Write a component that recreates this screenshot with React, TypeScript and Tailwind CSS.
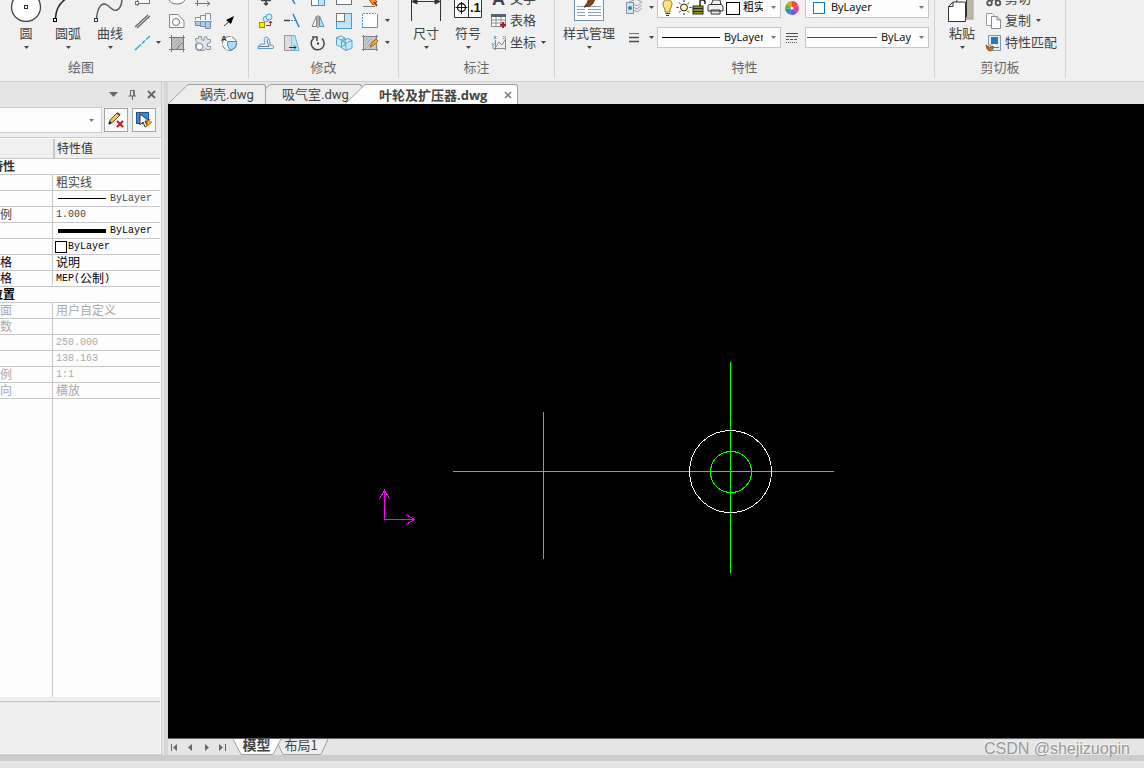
import type { ReactNode } from "react";

function Caret({ className = "text-[#444444]" }: { className?: string }) {
  return (
    <svg width="5" height="3" viewBox="0 0 5 3" className={`shrink-0 ${className}`} aria-hidden="true">
      <path d="M0 0H5L2.5 3Z" fill="currentColor" />
    </svg>
  );
}

function Icon({ children, size = 20 }: { children?: ReactNode; size?: number }) {
  return (
    <svg
      width={size}
      height={size}
      viewBox={`0 0 ${size} ${size}`}
      fill="none"
      stroke="#6b7280"
      strokeWidth="1"
      className="shrink-0"
      aria-hidden="true"
    >
      {children}
    </svg>
  );
}

function Group({ label, className, children }: { label: string; className: string; children: ReactNode }) {
  return (
    <section aria-label={label} className={`flex shrink-0 flex-col justify-end border-r border-[#d2d2d2] ${className}`}>
      <div className="flex items-end">{children}</div>
      <h2 className="h-6 text-center leading-[27px] text-[#666666]">{label}</h2>
    </section>
  );
}

function BigButton({ label, icon, className = "w-[42px]" }: { label: string; icon: ReactNode; className?: string }) {
  return (
    <button className={`flex shrink-0 flex-col items-center pb-[5px] ${className}`}>
      <Icon size={32}>{icon}</Icon>
      <span className="mb-1 h-5 leading-[22px] whitespace-nowrap">{label}</span>
      <Caret />
    </button>
  );
}

function ToolButton({ label, children }: { label: string; children: ReactNode }) {
  return (
    <button aria-label={label} className="flex h-[22px] w-[26px] items-center justify-center">
      <Icon>{children}</Icon>
    </button>
  );
}

function CaretButton({ label }: { label: string }) {
  return (
    <button aria-label={label} className="flex h-[22px] w-[10px] items-center justify-center pr-px pb-[2px]">
      <Caret />
    </button>
  );
}

function TextTool({ label, icon, menu = false }: { label: string; icon: ReactNode; menu?: boolean }) {
  return (
    <button className="flex h-[22px] items-center pb-[2px] whitespace-nowrap">
      <Icon>{icon}</Icon>
      <span className="ml-px leading-5">{label}</span>
      {menu && <span className="ml-[5px]"><Caret /></span>}
    </button>
  );
}

function Combo({ label, value, children }: { label: string; value: string; children?: ReactNode }) {
  return (
    <div className="flex h-[21px] w-[124px] items-center border border-[#c6c6c6] bg-[#fdfdfd] pl-1">
      {children}
      <select
        aria-label={label}
        className="h-full min-w-0 flex-1 appearance-none bg-transparent font-['Open_Sans','Noto_Sans_CJK_SC',sans-serif] text-[11px] text-black outline-none"
      >
        <option>{value}</option>
      </select>
      <span className="mr-1 ml-2"><Caret className="text-[#777777]" /></span>
    </div>
  );
}

function DrawGroup() {
  return (
    <Group label="绘图" className="w-[335px]">
      <div className="flex w-full items-end justify-end pr-[6px]">
        <div className="flex items-end pl-1">
          <BigButton label="直线" icon={<path d="M3 29L29 3" />} />
          <BigButton
            label="圆"
            icon={
              <>
                <circle cx="16" cy="17" r="14.5" fill="#fff" stroke="#444" strokeWidth="1.3" />
                <rect x="14.5" y="15.5" width="3" height="3" stroke="#333" />
              </>
            }
          />
          <BigButton
            label="圆弧"
            icon={
              <>
                <path d="M3.5 28C4 19 9 11 17 7" stroke="#222" strokeWidth="1.4" />
                <rect x="1.5" y="28.5" width="3" height="3" stroke="#000" fill="#fff" />
              </>
            }
          />
          <BigButton
            label="曲线"
            icon={
              <>
                <path d="M2.5 28C4 16 8 12 13 15C18 18 19 22 23 20C27 18 28 13 28 8" stroke="#555" strokeWidth="1.4" />
                <rect x="0.5" y="28.5" width="3" height="3" stroke="#333" fill="#fff" />
              </>
            }
          />
        </div>
        <div className="grid w-[33px] grid-cols-[23px_10px]">
          <ToolButton label="矩形">
            <path d="M3.5 17V8.5H15.5V14.5H4" fill="#fff" />
            <rect x="1.5" y="12.5" width="3" height="3" fill="#fff" />
          </ToolButton>
          <span />
          <ToolButton label="双线">
            <path d="M1 16L14 4M3 17L16 5" stroke="#666" strokeWidth="1.3" />
          </ToolButton>
          <span />
          <ToolButton label="构造线">
            <path d="M1 17L7 11.5M8 10.5L11 7.5M12 6.5L16 3" stroke="#27aee0" strokeWidth="1.5" />
          </ToolButton>
          <CaretButton label="更多线" />
        </div>
        <div className="grid grid-cols-[26px_26px_26px]">
          <ToolButton label="椭圆"><ellipse cx="10" cy="10" rx="8" ry="5" fill="#fff" /></ToolButton>
          <ToolButton label="点"><path d="M4.5 5V17M2 14.5H17M14 12L17 14.5L14 17" /></ToolButton>
          <span />
          <ToolButton label="面域">
            <path d="M2.5 3.5H11L17 10V16.5H2.5Z" fill="#fafafa" stroke="#888" />
            <circle cx="9" cy="11" r="3.5" fill="#fff" />
          </ToolButton>
          <ToolButton label="轴">
            <path d="M2.5 6.5H7.5V4.5H12.5V2.5H17.5V10H2.5Z" fill="#f4f8fb" stroke="#7f8e9c" />
            <path d="M2.5 10H17.5V17.5H12.5V15.5H7.5V14.5H2.5Z" fill="#a9cbe6" stroke="#6f8ba6" />
            <path d="M7.5 5V15M12.5 3V17" stroke="#7f8e9c" />
            <path d="M0 10H20" stroke="#fff" strokeWidth="2" />
            <path d="M1 10.5H19" stroke="#4fa8dd" />
          </ToolButton>
          <ToolButton label="引线">
            <path d="M5 15L13 8" stroke="#333" />
            <path d="M15 5L7 9L12 13Z" fill="#000" stroke="none" />
          </ToolButton>
          <ToolButton label="填充">
            <rect x="4.5" y="4.5" width="12" height="12" fill="#bfc1c4" stroke="#77797c" />
            <path d="M5 8L8 5M5 12L12 5M5 16L16 5M9 16L16 9" stroke="#a2a5a8" />
            <path d="M2 4.5H18M2 16.5H18M4.5 2V19M16.5 2V19M10 17C11 13 14 10 17 10" stroke="#77797c" />
          </ToolButton>
          <ToolButton label="零件">
            <path
              d="M2.5 5.5H5.5V3.5H8.5V6.5L11 7.5V4.5L13.5 3.5L14.5 6.5H17.5V9.5L14.5 10.5V13.5H17.5V16.5H14L12.5 15.5L11 17.5H4.5L2.5 15.5V11L4.5 9L2.5 7.5Z"
              fill="#dce3eb"
              stroke="#8d97a3"
            />
            <circle cx="6.5" cy="13.5" r="3.3" fill="#fff" stroke="#7c8793" />
          </ToolButton>
          <ToolButton label="查找">
            <circle cx="10.5" cy="10.5" r="7" fill="#f8fcff" stroke="#777" strokeDasharray="6 1" />
            <path d="M8.5 8.5H17.5Q18 16 11 17Q8 14 8.5 8.5" fill="#aedcf7" stroke="#448ab8" />
            <text x="2" y="8" fontSize="8" fontFamily="Liberation Sans" fontWeight="bold" fill="#333" stroke="none">A</text>
          </ToolButton>
        </div>
      </div>
    </Group>
  );
}

function ModifyGroup() {
  return (
    <Group label="修改" className="w-[150px]">
      <div className="ml-1 grid grid-cols-[26px_26px_26px_26px_26px_10px]">
        <ToolButton label="移动"><path d="M10 5V16M5 11.5H15M8 14L10 16L12 14" stroke="#444" strokeWidth="1.5" /></ToolButton>
        <ToolButton label="修剪"><path d="M7 5L13 15" stroke="#2374b5" strokeWidth="1.4" /></ToolButton>
        <ToolButton label="阵列">
          <rect x="3.5" y="9.5" width="7" height="7" fill="#fff" />
          <rect x="10.5" y="6.5" width="6" height="10" fill="#c1e7fa" stroke="#4d97c7" />
        </ToolButton>
        <ToolButton label="拉伸"><rect x="2.5" y="5.5" width="15" height="10" fill="#fff" /></ToolButton>
        <ToolButton label="删除">
          <path d="M3 17.5H15" stroke="#777" />
          <path d="M7 8L11 5L17 13L13 16Z" fill="#ef9628" stroke="#995120" />
          <path d="M14 13L17 17" stroke="#884422" strokeWidth="2" />
        </ToolButton>
        <span />
        <ToolButton label="复制对象">
          <rect x="3.5" y="11.5" width="5" height="5" fill="#ffed00" stroke="#a58a00" />
          <circle cx="10" cy="8" r="2.8" fill="#cceaff" stroke="#5a9dce" />
          <circle cx="13" cy="6" r="3" fill="#cceaff" stroke="#5a9dce" />
          <path d="M10 14.5H14.5V10M13 12L14.5 10L16 12" stroke="#a32424" />
        </ToolButton>
        <ToolButton label="打断">
          <path d="M2 9.5H8" stroke="#444" strokeWidth="1.5" />
          <path d="M9 9.5H15" stroke="#3894d2" strokeDasharray="2 1" />
          <path d="M11 3L17 16" stroke="#2779b5" strokeWidth="1.4" />
        </ToolButton>
        <ToolButton label="镜像">
          <path d="M8.5 5V15.5H4Z" fill="#fff" stroke="#888" />
          <path d="M11.5 5V15.5H16Z" fill="#addbf6" stroke="#4b94bd" />
          <path d="M10 4V17" stroke="#777" />
        </ToolButton>
        <ToolButton label="缩放">
          <rect x="2.5" y="2.5" width="15" height="15" fill="#bde6fa" stroke="#4c9aca" />
          <rect x="2.5" y="2.5" width="8" height="8" fill="#fff" stroke="#777" />
        </ToolButton>
        <ToolButton label="边界">
          <rect x="2.5" y="2.5" width="15" height="14" fill="#fff" stroke="none" />
          <path d="M2.5 17V2.5H16" stroke="#3aa2d8" strokeDasharray="2 1" />
          <path d="M17.5 3V16.5H3" stroke="#888" />
        </ToolButton>
        <CaretButton label="边界选项" />
        <ToolButton label="偏移">
          <path d="M2 15.5H17Q19 12 14 12Q14 4 10 4Q7 4 9 11H5Q2 12 2 15.5" fill="#e2f2fa" stroke="#5a9cc4" />
          <path d="M3 13.5H13Q10 6 12 6" stroke="#777" />
        </ToolButton>
        <ToolButton label="倒角">
          <path d="M2.5 2.5H10V17.5H2.5Z" fill="#ddd" stroke="#999" />
          <path d="M10 2.5H13L17 17.5H10" fill="#b8e4fa" stroke="#64b6dc" />
          <path d="M7 14.5H14M12 12.5L14 14.5L12 16.5" stroke="#333" />
        </ToolButton>
        <ToolButton label="旋转">
          <path d="M6 5A6.5 6.5 0 1 0 14 5.5" stroke="#444" strokeWidth="1.5" />
          <path d="M4 4H9V8" stroke="#444" strokeWidth="1.5" />
          <rect x="9" y="9.5" width="2" height="2" fill="#333" stroke="none" />
        </ToolButton>
        <ToolButton label="三维">
          <path d="M2.5 4.5L7 3L11 5V12L7 14L2.5 12ZM7.5 8L14 5.5L18 7.5V15L12 17.5L7.5 15ZM7.5 8L12 10L18 7.5M12 10V17.5M2.5 4.5L7 7L11 5" fill="#c6eafc" stroke="#5aa5d0" />
        </ToolButton>
        <ToolButton label="编辑填充">
          <rect x="3.5" y="3.5" width="13" height="13" fill="#c5c7c9" stroke="#777" />
          <path d="M5 8L8 5M5 12L12 5M5 16L16 5M9 16L16 9" stroke="#a5a8aa" />
          <path d="M2 3.5H18M2 16.5H18M3.5 2V18M16.5 2V18" stroke="#808386" />
          <path d="M10 14L12 10L16 6L18 8L14 12Z" fill="#f7a936" stroke="#9f6429" />
        </ToolButton>
        <CaretButton label="填充选项" />
      </div>
    </Group>
  );
}

function AnnotateGroup() {
  return (
    <Group label="标注" className="w-[156px]">
      <div className="ml-[6px] flex items-end">
        <BigButton label="尺寸" icon={<path d="M1.5 8V31M30.5 8V31M2 11.5H30M2 11.5L7 9V14ZM30 11.5L25 9V14Z" stroke="#333" fill="#333" />} />
        <BigButton
          label="符号"
          icon={
            <>
              <path d="M2.5 5.5H29.5V27.5H2.5ZM16.5 6V27" fill="#fff" stroke="#333" />
              <circle cx="9.5" cy="17.5" r="4" stroke="#111" strokeWidth="1.3" />
              <path d="M3.5 17.5H15.5M9.5 12V24" stroke="#111" />
              <text x="18" y="22" fontFamily="Liberation Sans" fontWeight="bold" fontSize="13" fill="#111" stroke="none">.1</text>
            </>
          }
        />
        <div className="flex flex-col items-start">
          <TextTool
            label="文字"
            icon={<text x="3" y="17" fontFamily="Liberation Sans" fontWeight="bold" fontSize="18" fill="#3d4148" stroke="none">A</text>}
          />
          <TextTool
            label="表格"
            icon={
              <>
                <path d="M2.5 4.5H16.5V16.5H2.5ZM2.5 10H16.5M2.5 13H16.5M7 6V16M12 6V16" fill="#fff" stroke="#858b94" />
                <path d="M2 5.5H17" stroke="#59616c" strokeWidth="3" />
                <path d="M14 12V18M11 15H17" stroke="#b51a20" strokeWidth="2" />
              </>
            }
          />
          <TextTool
            label="坐标"
            menu
            icon={
              <>
                <path d="M6.5 8V18M4 16.5H17M7 15L10 10L13 13L16 8M16.5 7V18" stroke="#858b94" />
                <path d="M5 4L7 7M7 4L5 7M14 4L17 7M17 4L14 7M3 11L4 13L6 11M4 13V16" stroke="#4aa5da" />
              </>
            }
          />
        </div>
      </div>
    </Group>
  );
}

function PropertiesGroup() {
  return (
    <Group label="特性" className="w-[380px]">
      <BigButton
        label="样式管理"
        className="w-[68px]"
        icon={
          <>
            <rect x="1.5" y="1.5" width="29" height="29" fill="#fff" stroke="#7290ab" />
            <path d="M4 16.5H12M4 19.5H12M4 22.5H12M4 25.5H12M15 16.5H28M15 19.5H28M15 22.5H28M15 25.5H28" stroke="#83a4c2" />
            <path d="M11 17Q15 13 16 8L22 6Q22 17 11 17" fill="#7d4718" stroke="#5c310f" />
          </>
        }
      />
      <div className="flex w-[34px] flex-col gap-[6px] pb-[5px]">
        <div className="flex items-center gap-[2px]">
          <Icon size={24}>
            <path d="M6 7L13 4L19 7L14 11ZM6 10L14 14L19 10M7 13L14 17L19 13" fill="#eceef0" stroke="#9aa1aa" />
            <rect x="3.5" y="7.5" width="7" height="11" fill="#d1e5f5" stroke="#8795a3" />
            <circle cx="7" cy="13" r="2" fill="#367fae" stroke="none" />
          </Icon>
          <Caret />
        </div>
        <div className="flex items-center gap-[2px]">
          <Icon size={24}>
            <path d="M6 8.5H16" stroke="#777" />
            <path d="M6 12.5H16M6 16.5H16" stroke="#444b55" strokeWidth="1.6" />
          </Icon>
          <Caret />
        </div>
      </div>
      <div className="flex flex-col gap-[9px] pb-[6px]">
        <Combo label="图层" value="粗实线">
          <svg width="78" height="18" viewBox="0 0 78 18" className="mr-[3px] shrink-0" aria-hidden="true">
            <path d="M3 10Q1 8 1 5Q1 1 5.5 1Q10 1 10 5Q10 8 8 10V13H3Z" fill="#ffe67c" stroke="#9b781c" />
            <path d="M3.5 14.5H8M4 16.5H7" stroke="#333" />
            <circle cx="22" cy="8.5" r="3.5" fill="#fff5b0" stroke="#222" />
            <path d="M22 1V3M22 14V16M14.5 8.5H16.5M27.5 8.5H29.5M17 3.5L18.5 5M25.5 12L27 13.5M27 3.5L25.5 5M18.5 12L17 13.5" stroke="#222" />
            <rect x="31" y="7" width="10" height="8" fill="#b3b800" stroke="#222" />
            <path d="M38 7V3Q38 0.5 40.5 1Q43 1 43 3V5M31 9.5H41M31 12.5H41" fill="none" stroke="#222" strokeWidth="1.5" />
            <path d="M49 6L51 1H58L59 6M46 7Q46 5.5 48 5.5H59Q61 6 61 8V12H46ZM49 11H58V15H49Z" fill="#eef1f3" stroke="#333" />
            <rect x="64.5" y="3.5" width="13" height="12" fill="#fff" stroke="#000" />
          </svg>
        </Combo>
        <Combo label="线型" value="ByLayer">
          <span className="mr-1 h-px w-[58px] shrink-0 bg-black" />
        </Combo>
      </div>
      <div className="flex w-6 flex-col items-center gap-[10px] pr-[2px] pb-[6px]">
        <Icon>
          <g stroke="none">
            <path d="M10 10L4.5 6A7 7 0 0 1 10 3Z" fill="#e59b1d" />
            <path d="M10 10V3A7 7 0 0 1 16 7Z" fill="#f14b41" />
            <path d="M10 10L16 7A7 7 0 0 1 15 15Z" fill="#d94693" />
            <path d="M10 10L15 15A7 7 0 0 1 8 16.5Z" fill="#7953cf" />
            <path d="M10 10L8 16.5A7 7 0 0 1 3 11Z" fill="#2592cb" />
            <path d="M10 10L3 11A7 7 0 0 1 4.5 6Z" fill="#63b735" />
          </g>
          <circle cx="10" cy="10" r="1.5" fill="#f4f4f4" stroke="none" />
        </Icon>
        <Icon>
          <path d="M4 5.5H16M4 8.5H16" stroke="#555" />
          <path d="M4 11.5H16" stroke="#555" strokeDasharray="3 1" />
          <path d="M4 14.5H16" stroke="#555" strokeDasharray="1 1" />
        </Icon>
      </div>
      <div className="flex flex-col gap-[9px] pb-[6px]">
        <Combo label="颜色" value="ByLayer">
          <span className="mr-[6px] ml-[3px] size-3 shrink-0 border border-[#1675c7] bg-white" />
        </Combo>
        <Combo label="线宽颜色" value="ByLayer">
          <span className="-ml-[3px] mr-1 h-px w-[70px] shrink-0 bg-[#ff0000]" />
        </Combo>
      </div>
    </Group>
  );
}

function ClipboardGroup() {
  return (
    <Group label="剪切板" className="w-[131px]">
      <div className="ml-[6px] flex items-end">
        <BigButton
          label="粘贴"
          icon={
            <>
              <rect x="15" y="4" width="12" height="25" fill="#bfb5a7" stroke="#a79b8b" />
              <path d="M10.5 11L14 7H20.5V27H10.5Z" fill="#fff" stroke="#333" />
              <path d="M2.5 16.5L7 12H19.5V31.5H2.5ZM2.5 16.5H7V12" fill="#fff" stroke="#333" />
            </>
          }
        />
        <div className="flex flex-col items-start pl-px">
          <TextTool
            label="剪切"
            icon={
              <>
                <path d="M7 3L12 13M14 3L8 13" stroke="#555" strokeWidth="1.8" />
                <circle cx="5.5" cy="15" r="2.3" stroke="#555" strokeWidth="1.8" />
                <circle cx="14" cy="15" r="2.3" stroke="#555" strokeWidth="1.8" />
              </>
            }
          />
          <TextTool
            label="复制"
            menu
            icon={
              <>
                <path d="M2.5 3.5H8L11 6.5V15.5H2.5Z" fill="#fff" stroke="#999" />
                <path d="M7.5 6.5H13L16.5 10V18.5H7.5ZM13 6.5V10H16.5" fill="#fff" stroke="#888" />
              </>
            }
          />
          <TextTool
            label="特性匹配"
            icon={
              <>
                <path d="M4.5 3.5H16.5V18.5H7V13H4.5Z" fill="#e4edf3" stroke="#8497a5" />
                <rect x="7" y="5" width="7" height="7" fill="#2778b7" stroke="none" />
                <path d="M9 15.5H15" stroke="#4b78a1" />
                <path d="M2 13Q6 17 9 14Q10 18 6 19Q3 19 2 13" fill="#b9753a" stroke="#894a1a" />
              </>
            }
          />
        </div>
      </div>
    </Group>
  );
}

type Row = { name?: string; value?: string; tone?: string; mark?: "thin" | "thick" | "box"; section?: boolean };

const rows: Row[] = [
  { name: "特性", section: true, tone: "text-[#333333]" },
  { value: "粗实线", tone: "text-[#444444]" },
  { value: "ByLayer", mark: "thin", tone: "text-[#444444]" },
  { name: "例", value: "1.000", tone: "text-[#444444]" },
  { value: "ByLayer", mark: "thick", tone: "text-black" },
  { value: "ByLayer", mark: "box", tone: "text-black" },
  { name: "格", value: "说明", tone: "text-black" },
  { name: "格", value: "MEP(公制)", tone: "text-black" },
  { name: "位置", section: true, tone: "text-black" },
  { name: "面", value: "用户自定义", tone: "text-[#aaaaaa]" },
  { name: "数", tone: "text-[#aaaaaa]" },
  { value: "250.000", tone: "text-[#aaaaaa]" },
  { value: "138.163", tone: "text-[#aaaaaa]" },
  { name: "例", value: "1:1", tone: "text-[#aaaaaa]" },
  { name: "向", value: "横放", tone: "text-[#aaaaaa]" },
];

const isCjk = (s = "") => /[\u4e00-\u9fff]/.test(s);

function CellText({ text }: { text: string }) {
  return (
    <>
      {(text.match(/[\u4e00-\u9fff]+|[^\u4e00-\u9fff]+/g) ?? []).map((part) => (
        <span key={part} className={isCjk(part) ? "pt-[3px] text-[12px]" : "text-[10px]"}>{part}</span>
      ))}
    </>
  );
}

function PropertyTable() {
  return (
    <table className="w-full table-fixed border-separate border-spacing-0 font-['Liberation_Mono','Noto_Sans_CJK_SC',monospace] text-[12px] leading-[15px]">
      <colgroup>
        <col className="w-[53px]" />
        <col />
      </colgroup>
      <thead>
        <tr className="h-5 bg-[#f0f0f0] text-left text-[#333333]">
          <th className="border-b border-[#c8c8c8] p-0" aria-label="名称" />
          <th className="border-b border-l-2 border-[#c8c8c8] p-0 pt-1 pl-[2px] font-normal">特性值</th>
        </tr>
      </thead>
      <tbody>
        {rows.map((row, i) =>
          row.section ? (
            <tr key={i} className={`h-4 ${row.tone}`}>
              <th colSpan={2} className="h-4 border-b border-[#c8c8c8] p-0 text-left font-bold">
                <span className="-ml-[9px] block h-[15px] leading-[18px]">{row.name}</span>
              </th>
            </tr>
          ) : (
            <tr key={i} className={`h-4 ${row.tone}`}>
              <td className="h-4 border-r border-b border-[#c8c8c8] p-0"><span className="block h-[15px] leading-[18px]">{row.name}</span></td>
              <td className="h-4 border-b border-[#c8c8c8] p-0">
                <div className={`flex h-[15px] items-center whitespace-nowrap ${row.mark === "box" ? "pl-[2px]" : row.mark ? "pl-[5px]" : "pl-[3px]"}`}>
                  {row.mark === "thin" && <span className="mr-1 h-px w-12 bg-black" />}
                  {row.mark === "thick" && <span className="mr-1 h-1 w-12 bg-black" />}
                  {row.mark === "box" && <span className="mr-px size-3 border border-black bg-white" />}
                  {row.value && <CellText text={row.value} />}
                </div>
              </td>
            </tr>
          ),
        )}
      </tbody>
    </table>
  );
}

function PropertyPanel() {
  return (
    <aside className="flex w-[162px] shrink-0 flex-col border-r border-b border-[#cccccc] bg-[#eeeeee]">
      <header className="flex h-[25px] items-center justify-end gap-[9px] bg-[#e5e5e5] pr-px text-[#666666]">
        <button aria-label="菜单" className="flex w-[10px] justify-center">
          <svg width="9" height="5" viewBox="0 0 9 5" aria-hidden="true"><path d="M0 0H9L4.5 5Z" fill="currentColor" /></svg>
        </button>
        <button aria-label="固定" className="w-[10px]">
          <svg width="10" height="10" viewBox="0 0 10 10" fill="none" stroke="currentColor" aria-hidden="true">
            <path d="M3.5 6V0.5H7V6M1.5 6H9M5.5 6V10" /><path d="M7 0V6" strokeWidth="1.5" />
          </svg>
        </button>
        <button aria-label="关闭" className="w-[14px] pl-px">
          <svg width="9" height="9" viewBox="0 0 9 9" fill="none" stroke="currentColor" strokeWidth="1.8" aria-hidden="true"><path d="M1 1L8 8M8 1L1 8" /></svg>
        </button>
      </header>
      <div className="flex h-[30px] items-start">
        <div className="flex h-[26px] flex-1 items-center border border-l-0 border-[#cccccc] bg-[#fdfdfd]">
          <select aria-label="选择对象" className="h-full min-w-0 flex-1 appearance-none bg-transparent outline-none"><option value="" /></select>
          <span className="mr-[7px]"><Caret className="text-[#777777]" /></span>
        </div>
        <button aria-label="取消选择" className="mt-[1px] ml-[2px] flex size-6 items-center justify-center border border-[#a5a5a5] bg-[#fafafa]">
          <Icon>
            <path d="M3 14L4 10L11 3L14 5L7 12Z" fill="#f4c25c" stroke="#735027" />
            <path d="M11 3L14 5" stroke="#44515f" strokeWidth="2" />
            <path d="M3 14L5 12" stroke="#222" strokeWidth="2" />
            <path d="M11 11L17 17M17 11L11 17" stroke="#c3191d" strokeWidth="2" />
          </Icon>
        </button>
        <button aria-label="快速选择" className="mt-[1px] mr-[5px] ml-1 flex size-6 items-center justify-center border border-[#a5a5a5] bg-[#fafafa]">
          <Icon>
            <rect x="2.5" y="2.5" width="12" height="11" fill="#3b8bce" stroke="#1c5893" />
            <path d="M6 4V15L9 12L11 17L13 16L11 11H15Z" fill="#fff" stroke="#333" />
            <path d="M16 9L12 13H14L12 17L18 12H15Z" fill="#ffc331" stroke="#d87708" />
          </Icon>
        </button>
      </div>
      <div className="flex flex-1 flex-col border-t border-[#cccccc] bg-[#fdfdfd] pt-px pr-[1px] pb-[1px]">
        <PropertyTable />
        <div className="w-[53px] flex-1 border-r border-[#c8c8c8]" />
        <div className="h-14 border-t-4 border-[#eeeeee] bg-[#eeeeee]">
          <div className="border-t border-[#bebebe]" />
        </div>
      </div>
    </aside>
  );
}

function FileTab({ label, className, active = false }: { label: string; className: string; active?: boolean }) {
  const fill = active ? "#fdfdfd" : "#eeeeee";
  return (
    <div className={`relative flex h-5 shrink-0 ${className}`} role="tab" aria-selected={active}>
      <svg width="21" height="20" viewBox="0 0 21 20" className="shrink-0" aria-hidden="true">
        <path d="M0 20L19 1Q20 0 21 0V20Z" fill={fill} />
        <path d="M0.5 19.5L19 1.5Q20 0.5 21 0.5" fill="none" stroke="#a0a0a0" />
      </svg>
      <div
        className={`flex min-w-0 flex-1 items-center rounded-tr-[3px] border-t border-r border-[#a0a0a0] whitespace-nowrap ${
          active ? "bg-[#fdfdfd] pl-[13px] font-bold" : "bg-[#eeeeee] pl-[11px] font-['Roboto','Noto_Sans_CJK_SC',sans-serif]"
        }`}
      >
        <button className="leading-[18px]">{label}</button>
        {active && (
          <button aria-label="关闭标签" className="mr-[5px] ml-auto">
            <svg width="8" height="8" viewBox="0 0 8 8" fill="none" stroke="#777" strokeWidth="1.5" aria-hidden="true"><path d="M1 1L7 7M7 1L1 7" /></svg>
          </button>
        )}
      </div>
    </div>
  );
}

function Drawing() {
  return (
    <svg width="976" height="634" viewBox="168 104 976 634" fill="none" shapeRendering="crispEdges" role="img" aria-label="叶轮及扩压器">
      <g stroke="#00ff00">
        <path d="M453 471.5H834M543.5 412V559M730.5 362V573" />
        <circle cx="731" cy="472" r="20.5" />
      </g>
      <circle cx="730.5" cy="471.5" r="41" stroke="#ffffff" />
      <path d="M384.5 490V519.5H415M379.5 499L384.5 490L389.5 499M406 514.5L414.5 519.5L406 524.5" stroke="#ff00ff" />
    </svg>
  );
}

function LayoutBar() {
  return (
    <nav aria-label="布局" className="flex h-[17px] border-t border-[#666666] bg-[#e5e5e5]">
      <div className="flex w-[65px] items-center gap-[8px] pl-[3px] text-[#666666]">
        {[
          ["第一个", "M0 0V7H1V0ZM6 0V7L2 3.5Z"],
          ["上一个", "M5 0V7L1 3.5Z"],
          ["下一个", "M2 0V7L6 3.5Z"],
          ["最后一个", "M0 0V7L4 3.5ZM7 0V7H6V0Z"],
        ].map(([label, d]) => (
          <button key={label} aria-label={label}>
            <svg width="8" height="7" viewBox="0 0 8 7" aria-hidden="true"><path d={d} fill="currentColor" /></svg>
          </button>
        ))}
      </div>
      <button className="relative z-10 flex h-4 w-[49px] justify-center font-bold">
        <svg width="49" height="16" viewBox="0 0 49 16" className="absolute inset-0" aria-hidden="true">
          <path d="M0 0H48L40 15.5H8Z" fill="#fdfdfd" />
          <path d="M0 0L8 15.5H40L48 0" fill="none" stroke="#a0a0a0" />
        </svg>
        <span className="relative -mt-[2px] pr-[2px] text-[14px] leading-4">模型</span>
      </button>
      <button className="relative -ml-1 flex h-4 w-[52px] justify-center">
        <svg width="52" height="16" viewBox="0 0 52 16" className="absolute inset-0" aria-hidden="true">
          <path d="M0 5L5 15.5H43L50 0" fill="#eeeeee" stroke="#a0a0a0" />
        </svg>
        <span className="relative -mt-[2px] pr-[6px] font-['Noto_Sans_CJK_SC',sans-serif] leading-4">布局1</span>
      </button>
    </nav>
  );
}

export default function App() {
  return (
    <div className="relative flex min-h-screen flex-col overflow-hidden bg-[#e5e5e5] font-['Open_Sans','Noto_Sans_CJK_SC',sans-serif] text-[13px] text-[#444444]">
      <div className="h-[82px] overflow-hidden border-b border-[#d0d0d0] bg-[#f0f0f0] pb-[3px]">
        <div className="-ml-[86px] flex h-full">
          <DrawGroup />
          <ModifyGroup />
          <AnnotateGroup />
          <PropertiesGroup />
          <ClipboardGroup />
        </div>
      </div>
      <main className="flex flex-1">
        <PropertyPanel />
        <div className="w-[6px] shrink-0 border-r-4 border-[#d6d6d6] bg-[#e5e5e5]" />
        <div className="flex min-w-0 flex-1 flex-col">
          <div role="tablist" className="flex h-[22px] items-end">
            <FileTab label="蜗壳.dwg" className="z-10 w-[98px]" />
            <FileTab label="吸气室.dwg" className="-ml-4 w-[112px]" />
            <FileTab label="叶轮及扩压器.dwg" active className="z-20 -ml-[17px] w-[173px]" />
          </div>
          <div className="flex-1 overflow-hidden bg-black">
            <Drawing />
          </div>
          <LayoutBar />
        </div>
      </main>
      <div className="h-[6px] bg-[#cccccc]" />
      <footer className="h-[7px]" />
      <p className="absolute right-[14px] bottom-[9px] font-['Liberation_Sans',sans-serif] text-[16px] leading-5 text-[#999999] [text-shadow:-1px_-1px_0_#f5f5f5]">
        CSDN @shejizuopin
      </p>
    </div>
  );
}
